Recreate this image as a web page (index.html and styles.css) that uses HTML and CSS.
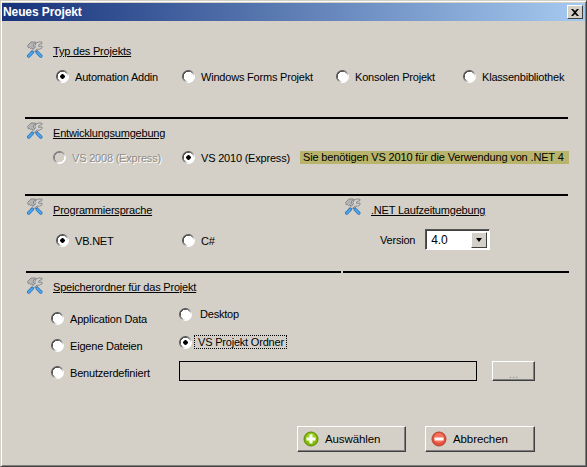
FILE: index.html

```html
<!DOCTYPE html>
<html lang="de">
<head>
    <meta charset="UTF-8">
    <title>Neues Projekt</title>
    <link rel="stylesheet" href="styles.css">
</head>
<body>
<svg class="defs" width="0" height="0">
    <symbol id="tools" viewBox="0 0 17 17">
        <path d="M1.500 4.500L5 1h4.500l.5 1-2.500 1.200v2.300L12 10l-1.500 1.500L6 7 4.500 7.500 3.500 6.500 2.500 7z" fill="#b4b4b4" stroke="#7c7c7c" stroke-width=".8"/>
        <path d="M16 2.500l-3.300 1.300v1.700l3.300-.5v1.800l-2.800 1.500-2.200-.2L6.500 12 5 10.500l4.300-4.300-.3-2 1.300-2.300 2.700-1 3 .3z" fill="#d0d0d0" stroke="#7c7c7c" stroke-width=".8"/>
        <path d="M2.700 15L6.300 11.400M14.800 15L11.200 11.400" stroke="#2a6fb5" stroke-width="3.400" stroke-linecap="round" fill="none"/>
        <path d="M2.700 15L6.300 11.400M14.800 15L11.200 11.400" stroke="#4aa8f0" stroke-width="2" stroke-linecap="round" fill="none"/>
    </symbol>
</svg>
<div class="window">
    <div class="titlebar">
        <span class="title">Neues Projekt</span>
        <button class="close" type="button">
            <svg width="8" height="7" viewBox="0 0 8 7"><path d="M0 0h2l2 2 2-2h2L5 3.500 8 7H6L4 5 2 7H0l3-3.500z" fill="#000"/></svg>
        </button>
    </div>

    <section class="group group-type">
        <div class="head"><svg class="icon"><use href="#tools"/></svg><h2>Typ des Projekts</h2></div>
        <div class="options">
            <label><input type="radio" name="typ" checked>Automation Addin</label>
            <label><input type="radio" name="typ">Windows Forms Projekt</label>
            <label><input type="radio" name="typ">Konsolen Projekt</label>
            <label><input type="radio" name="typ">Klassenbibliothek</label>
        </div>
    </section>

    <div class="rule"></div>
    <section class="group group-env">
        <div class="head"><svg class="icon"><use href="#tools"/></svg><h2>Entwicklungsumgebung</h2></div>
        <div class="options">
            <label class="disabled"><input type="radio" name="env" disabled>VS 2008 (Express)</label>
            <label><input type="radio" name="env" checked>VS 2010 (Express)</label>
            <span class="notice">Sie benötigen VS 2010 für die Verwendung von .NET 4</span>
        </div>
    </section>

    <div class="rule"></div>
    <section class="group group-lang">
        <div class="lang-col">
            <div class="head"><svg class="icon"><use href="#tools"/></svg><h2>Programmiersprache</h2></div>
            <div class="options">
                <label><input type="radio" name="lang" checked>VB.NET</label>
                <label><input type="radio" name="lang">C#</label>
            </div>
        </div>
        <div class="runtime-col">
            <div class="head"><svg class="icon"><use href="#tools"/></svg><h2>.NET Laufzeitumgebung</h2></div>
            <div class="version">
                <span>Version</span>
                <div class="combo"><span class="combo-value">4.0</span><span class="combo-btn"></span></div>
            </div>
        </div>
    </section>

    <div class="rule rule-split"><i></i><i></i></div>
    <section class="group group-folder">
        <div class="head"><svg class="icon"><use href="#tools"/></svg><h2>Speicherordner für das Projekt</h2></div>
        <div class="folder-grid">
            <div class="folder-left">
                <label><input type="radio" name="dir">Application Data</label>
                <label><input type="radio" name="dir">Eigene Dateien</label>
                <label><input type="radio" name="dir">Benutzerdefiniert</label>
            </div>
            <div class="folder-right">
                <label><input type="radio" name="dir">Desktop</label>
                <label class="focused"><input type="radio" name="dir" checked><span>VS Projekt Ordner</span></label>
                <div class="path-row">
                    <div class="path"></div>
                    <button class="btn browse" type="button" disabled>...</button>
                </div>
            </div>
        </div>
    </section>

    <div class="actions">
        <button class="btn action" type="button">
            <svg width="16" height="16" viewBox="0 0 16 16"><circle cx="8" cy="8" r="7" fill="#80b800" stroke="#5c8a10"/><circle cx="8" cy="7" r="5" fill="#9cd01e"/><path d="M6.500 3.500h3v3h3v3h-3v3h-3v-3h-3v-3h3z" fill="#fff"/></svg>
            Auswählen
        </button>
        <button class="btn action" type="button">
            <svg width="16" height="16" viewBox="0 0 16 16"><circle cx="8" cy="8" r="7" fill="#e4503c" stroke="#b8432f"/><circle cx="8" cy="7" r="5" fill="#f4725e"/><path d="M3.500 6.500h9v3h-9z" fill="#fff"/></svg>
            Abbrechen
        </button>
    </div>
</div>
</body>
</html>
```

FILE: styles.css

```css
* {
    box-sizing: border-box;
}
html, body {
    margin: 0;
    padding: 0;
}
body {
    width: 587px;
    height: 467px;
    overflow: hidden;
    font-family: "Liberation Sans", Arial, sans-serif;
    font-size: 11px;
    letter-spacing: -0.2px;
    color: #000;
}
.defs {
    position: absolute;
}
.window {
    width: 587px;
    height: 467px;
    padding: 3px 2px 2px 2px;
    background-color: #d4d0c8;
    border-style: solid;
    border-width: 1px;
    border-color: #d4d0c8 #404040 #404040 #d4d0c8;
    box-shadow: inset 1px 1px 0 #fff, inset -1px -1px 0 #808080;
}
.titlebar {
    display: flex;
    align-items: center;
    justify-content: space-between;
    height: 18px;
    margin: -1px -1px 0 -1px;
    padding: 0 2px 0 1px;
    background: linear-gradient(to right, #16327a, #a6caf0);
}
.title {
    color: #fff;
    font-weight: bold;
    font-size: 12px;
    letter-spacing: -0.1px;
}
.close {
    display: flex;
    align-items: center;
    justify-content: center;
    width: 16px;
    height: 14px;
    padding: 0;
    background-color: #d4d0c8;
    border: 1px solid;
    border-color: #fff #404040 #404040 #fff;
}

.group {
    margin-left: 22px;
    width: 543px;
}
.head {
    display: flex;
    align-items: center;
    height: 17px;
    padding-left: 1px;
    gap: 10px;
}
.icon {
    width: 17px;
    height: 17px;
}
h2 {
    margin: 3px 0 0 0;
    font-size: 11px;
    font-weight: normal;
    text-decoration: underline;
}
label {
    display: flex;
    align-items: center;
    white-space: nowrap;
}
input[type="radio"] {
    appearance: none;
    flex: none;
    width: 13px;
    height: 13px;
    margin: 0 6px 0 0;
    border-radius: 50%;
    background:
        radial-gradient(circle, #000 0 2px, transparent 2.500px),
        radial-gradient(circle, #fff 0 4.500px, transparent 5px),
        linear-gradient(135deg, #555 30%, #999 50%, #fff 70%);
}
input[type="radio"]:not(:checked) {
    background:
        radial-gradient(circle, #fff 0 4.500px, transparent 5px),
        linear-gradient(135deg, #555 30%, #999 50%, #fff 70%);
}
input[type="radio"]:disabled {
    background:
        radial-gradient(circle, #d4d0c8 0 4.500px, transparent 5px),
        linear-gradient(135deg, #808080 30%, #aaa 50%, #fff 70%);
}
.disabled {
    color: #8f8c85;
    text-shadow: 1px 1px 0 #fff;
}

.rule {
    height: 2px;
    margin-left: 22px;
    width: 543px;
    background-color: #000;
}
.options {
    display: grid;
    align-items: center;
}

.group-type {
    height: 96px;
    padding-top: 20px;
}
.group-type .options {
    grid-template-columns: 126px 154px 127px 1fr;
    margin-top: 12px;
    padding-left: 31px;
}

.group-env {
    height: 75px;
    padding-top: 3px;
}
.group-env h2 {
    margin-top: 4px;
}
.group-env .options {
    grid-template-columns: 129px 118px 269px;
    margin-top: 12px;
    padding-left: 28px;
}
.notice {
    height: 13px;
    padding-left: 3px;
    line-height: 13px;
    letter-spacing: -0.15px;
    background-color: #b8b46c;
    white-space: nowrap;
}

.group-lang {
    display: flex;
    height: 75px;
    padding-top: 2px;
}
.group-lang h2 {
    margin-top: 7px;
}
.lang-col {
    width: 318px;
}
.lang-col .options {
    grid-template-columns: 126px 1fr;
    margin-top: 19px;
    padding-left: 31px;
}
.version {
    display: flex;
    align-items: center;
    gap: 10px;
    margin-top: 14px;
    padding-left: 37px;
}
.combo {
    display: flex;
    align-items: center;
    justify-content: space-between;
    width: 65px;
    height: 21px;
    padding: 2px;
    background-color: #fff;
    border: 1px solid;
    border-color: #555 #fff #fff #555;
    box-shadow: inset 1px 1px 0 #404040;
}
.combo-value {
    padding-left: 3px;
    font-size: 12px;
}
.combo-btn {
    display: flex;
    align-items: center;
    justify-content: center;
    width: 16px;
    height: 16px;
    background-color: #d4d0c8;
    border: 1px solid;
    border-color: #fff #404040 #404040 #fff;
}
.combo-btn::after {
    content: "";
    border-style: solid;
    border-width: 4px 3.500px 0 3.500px;
    border-color: #000 transparent transparent transparent;
}

.rule-split {
    display: flex;
    gap: 2px;
    margin-left: 23px;
    background-color: transparent;
}
.rule-split i {
    display: block;
    height: 2px;
    width: 315px;
    background-color: #000;
}
.rule-split i + i {
    width: 226px;
}

.group-folder {
    padding-top: 4px;
}
.folder-grid {
    display: flex;
}
.folder-left {
    display: flex;
    flex-direction: column;
    gap: 14px;
    width: 154px;
    margin-top: 18px;
    padding-left: 26px;
}
.folder-right {
    display: flex;
    flex-direction: column;
    margin-top: 13px;
}
.folder-right label {
    height: 14px;
}
.folder-right input[type="radio"] {
    margin-right: 8px;
}
.folder-right label + label {
    margin-top: 14px;
}
.focused span {
    margin-left: -5px;
    padding: 0 2px 0 3px;
    outline: 1px dotted #000;
}
.path-row {
    display: flex;
    gap: 15px;
    margin-top: 12px;
}
.path {
    width: 298px;
    height: 20px;
    border: 1px solid #000;
}
.btn {
    font-family: inherit;
    font-size: 11.500px;
    letter-spacing: -0.1px;
    color: #000;
    padding: 0;
    background-color: #d4d0c8;
    border: 1px solid;
    border-color: #fff #404040 #404040 #fff;
    box-shadow: inset -1px -1px 0 #808080;
}
.browse {
    width: 43px;
    height: 20px;
    color: #8f8c85;
    line-height: 24px;
}
.actions {
    display: flex;
    gap: 19px;
    margin-top: 45px;
    margin-left: 294px;
}
.action {
    display: flex;
    align-items: center;
    gap: 6px;
    width: 109px;
    height: 26px;
    padding-left: 5px;
}
.action + .action {
    width: 110px;
}
```
